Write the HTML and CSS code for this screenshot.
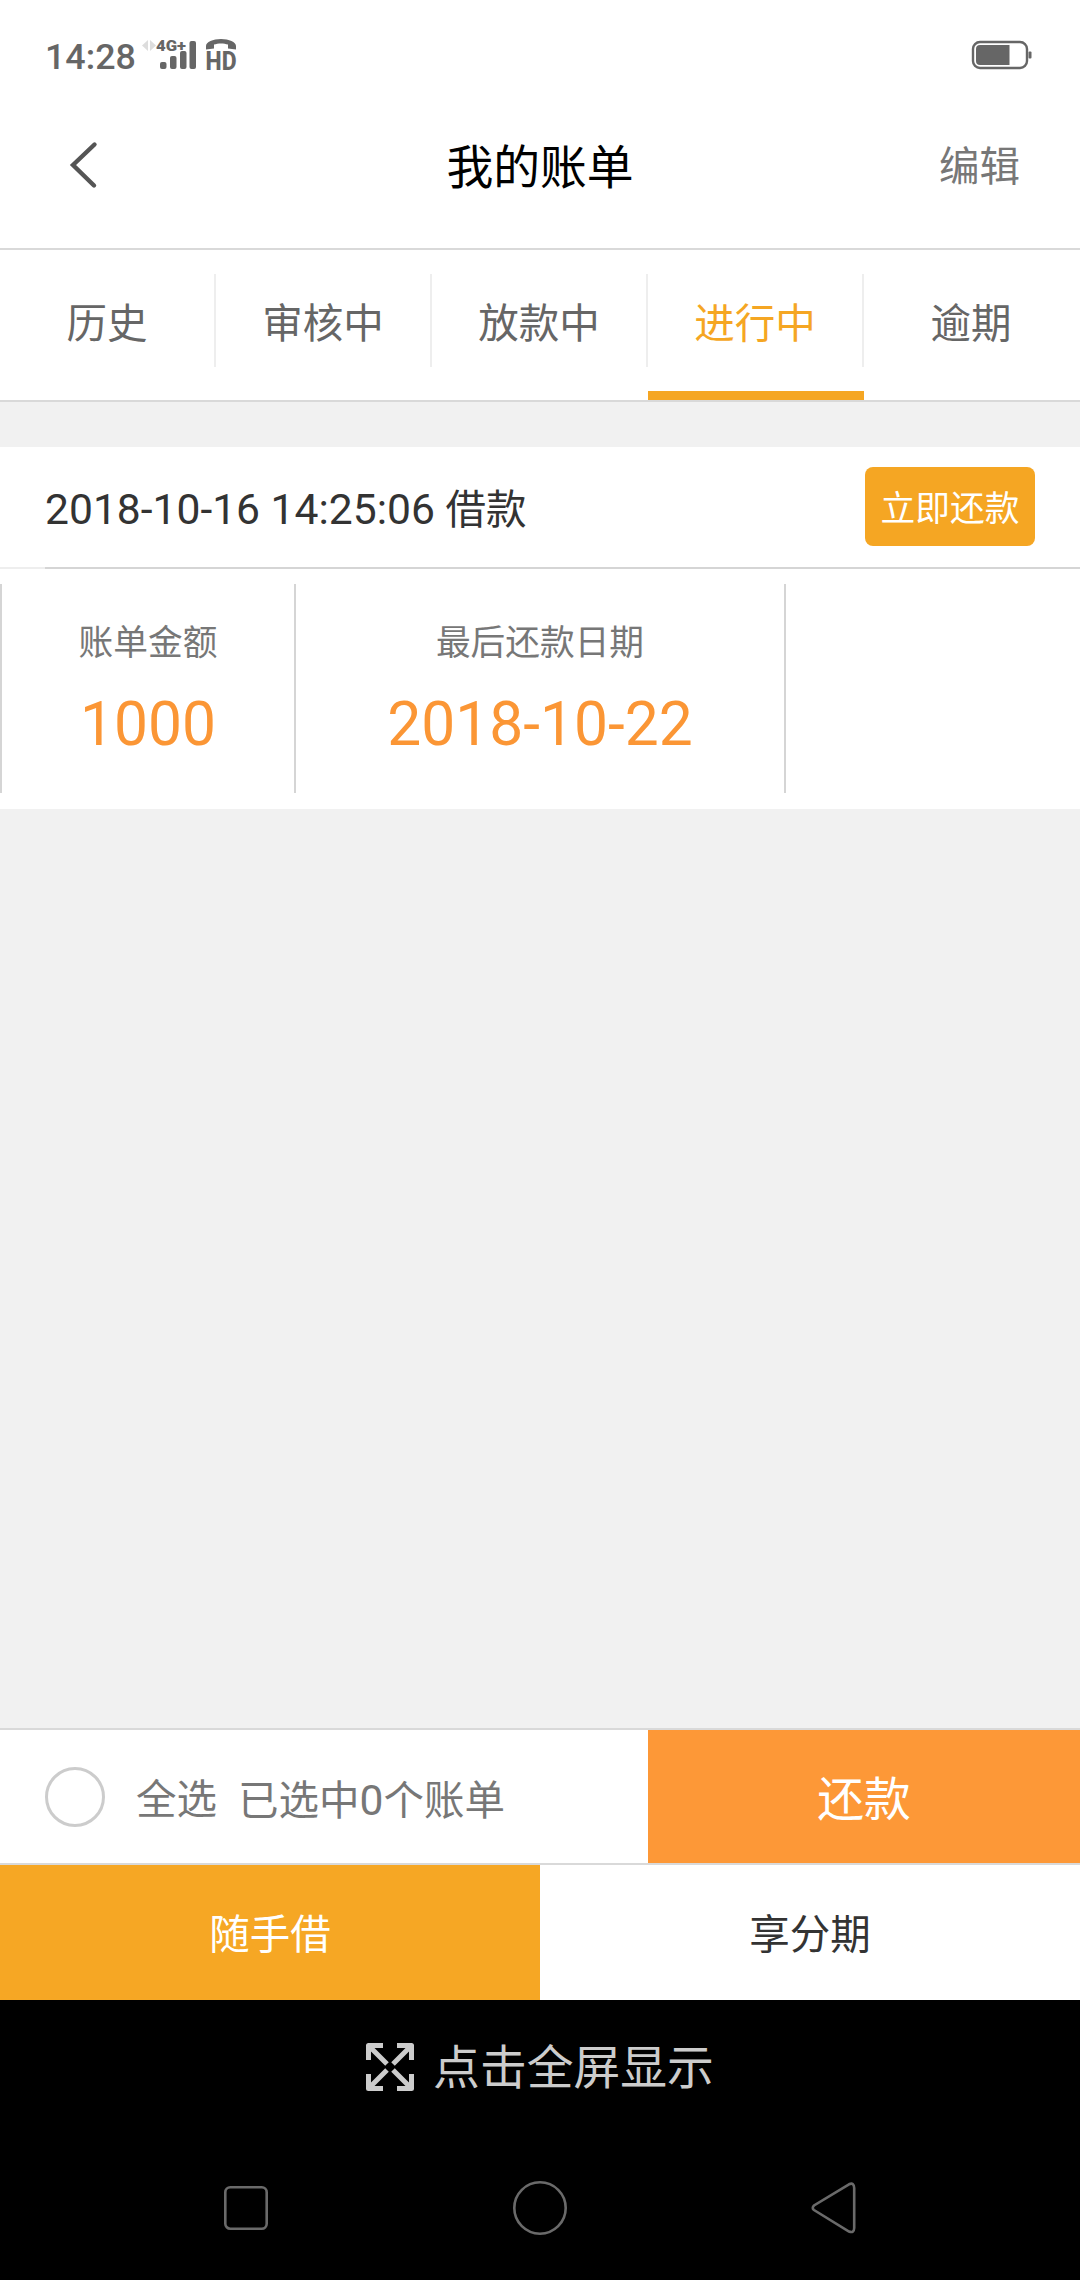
FILE: index.html
```html
<!DOCTYPE html>
<html lang="zh-CN">

<head>
  <meta charset="UTF-8">
  <title>我的账单</title>
  <meta name="viewport" content="width=device-width, initial-scale=1.0">
  <link rel="stylesheet" href="styles.css">
</head>

<body>
<div class="page">
  <div class="status-bar">
    <div class="status-left">
      <span class="time">14:28</span>
      <svg class="signal" width="104" height="40" viewBox="0 0 104 40">
        <path d="M7 4v11L1 9.500zM9 4v11l6-5.500z" fill="#ddd"/>
        <text class="net" x="15" y="14.500" textLength="30" lengthAdjust="spacingAndGlyphs">4G+</text>
        <rect x="19" y="26" width="6.500" height="7" rx="2"/>
        <rect x="29" y="20" width="6.500" height="13" rx="2"/>
        <rect x="39" y="15" width="6.500" height="18" rx="2"/>
        <rect x="48.500" y="5" width="6.500" height="28" rx="2"/>
        <path d="M65 13.500V10c0-4 7-7 15-7s15 3 15 7v3.500l-8-1V8.500c-4-1.500-10-1.500-14 0v4z"/>
        <text class="hd" x="64.500" y="33.500" textLength="31" lengthAdjust="spacingAndGlyphs">HD</text>
      </svg>
    </div>
    <svg width="62" height="30" viewBox="0 0 62 30">
      <rect x="2" y="2" width="54" height="26" rx="7" fill="none" stroke="#666" stroke-width="2.400"/>
      <path d="M9 5h29.500v20H9a4 4 0 0 1-4-4V9a4 4 0 0 1 4-4z" fill="#666"/>
      <rect x="57.500" y="11.500" width="3" height="7" rx="1" fill="#666"/>
    </svg>
  </div>

  <div class="header">
    <svg class="back" width="30" height="48" viewBox="0 0 30 48">
      <path d="M25.500 3.500L4 24l21 20.500" fill="none" stroke="#555" stroke-width="4.400" stroke-linecap="round"/>
    </svg>
    <div class="title">我的账单</div>
    <div class="edit">编辑</div>
  </div>

  <div class="tabs">
    <div class="tab">历史</div>
    <div class="tab">审核中</div>
    <div class="tab">放款中</div>
    <div class="tab active">进行中</div>
    <div class="tab">逾期</div>
  </div>

  <div class="content">
    <div class="card">
      <div class="card-head">
        <div class="card-title"><span class="num">2018-10-16 14:25:06 </span>借款</div>
        <button class="pay-btn">立即还款</button>
      </div>
      <div class="card-line"></div>
      <div class="card-body">
        <div class="cell">
          <div class="label">账单金额</div>
          <div class="value">1000</div>
        </div>
        <div class="cell">
          <div class="label">最后还款日期</div>
          <div class="value">2018-10-22</div>
        </div>
        <div class="cell"></div>
      </div>
    </div>
  </div>

  <div class="select-bar">
    <div class="select-left">
      <span class="circle"></span>
      <span class="all">全选</span>
      <span class="count">已选中<span class="num">0</span>个账单</span>
    </div>
    <div class="repay">还款</div>
  </div>

  <div class="bottom-tabs">
    <div class="bottom-tab on">随手借</div>
    <div class="bottom-tab">享分期</div>
  </div>

  <div class="fullscreen">
    <svg width="48" height="48" viewBox="0 0 48 48">
      <g fill="none" stroke="#ccc" stroke-width="5">
        <path d="M17 2.500H2.500V17M31 2.500h14.500V17M17 45.500H2.500V31M31 45.500h14.500V31" stroke-linejoin="round"/>
        <path d="M3 3l18 18M45 3L27 21M3 45l18-18M45 45L27 27"/>
      </g>
    </svg>
    <span>点击全屏显示</span>
  </div>

  <div class="nav">
    <svg width="46" height="56" viewBox="0 0 46 56">
      <rect x="2.300" y="7.300" width="41.400" height="41.400" rx="5" fill="none" stroke="#6a6a6a" stroke-width="2.600"/>
    </svg>
    <svg width="56" height="56" viewBox="0 0 56 56">
      <circle cx="28" cy="28" r="25.700" fill="none" stroke="#6a6a6a" stroke-width="2.600"/>
    </svg>
    <svg width="46" height="56" viewBox="0 0 46 56">
      <path d="M38 4.300L3 25.500Q0.500 28 3 30L38 51.500Q43 53.500 43.200 48V8Q43 2 38 4.300z" fill="none" stroke="#6a6a6a" stroke-width="2.600"/>
    </svg>
  </div>
</div>
</body>
</html>
```
FILE: styles.css
```css
body {
  margin: 0;
  padding: 0;
  font-family: Roboto, "Noto Sans CJK SC", sans-serif;
  background-color: #f1f1f1;
}

.page {
  width: 1080px;
  height: 2280px;
  display: flex;
  flex-direction: column;
  overflow: hidden;
}

svg {
  display: block;
}

/* status bar */
.status-bar {
  height: 84px;
  padding: 0 47px 0 45px;
  display: flex;
  justify-content: space-between;
  background-color: #fff;
}

.status-bar > svg {
  margin-top: 40px;
}

.status-left {
  display: flex;
}

.time {
  width: 96px;
  margin-top: 38px;
  font-size: 35.800px;
  line-height: 38px;
  font-weight: 500;
  color: #666;
}

.signal {
  margin-top: 36px;
  fill: #666;
}

.net {
  font-size: 15px;
  font-weight: 900;
}

.hd {
  font-size: 26px;
  font-weight: 800;
}

/* header */
.header {
  height: 158px;
  padding: 0 60px 6px;
  display: grid;
  grid-template-columns: 1fr auto 1fr;
  align-items: center;
  background-color: #fff;
  border-bottom: 2px solid #d9d9d9;
}

.back {
  margin: 3px 0 0 9px;
}

.title {
  font-size: 46.800px;
  color: #000;
}

.edit {
  font-size: 40.500px;
  color: #777;
  text-align: right;
}

/* tabs */
.tabs {
  height: 150px;
  display: flex;
  background-color: #fff;
  border-bottom: 2px solid #d9d9d9;
}

.tab {
  flex: 1;
  box-sizing: border-box;
  height: 150px;
  padding-right: 2px;
  line-height: 149px;
  text-align: center;
  font-size: 40.500px;
  color: #666;
  background: linear-gradient(#eee, #eee) right 24px / 2px 93px no-repeat;
}

.tab:last-child {
  background: none;
}

.tab.active {
  color: #f5a623;
  border-bottom: 9px solid #f5a623;
  background-origin: border-box;
}

/* bill card */
.content {
  flex: 1;
  padding-top: 45px;
}

.card {
  background-color: #fff;
}

.card-head {
  height: 118px;
  padding: 0 45px 2px;
  display: flex;
  align-items: center;
  justify-content: space-between;
}

.card-title {
  font-size: 40.500px;
  color: #333;
  white-space: pre;
}

.num {
  font-size: 42.600px;
}

.pay-btn {
  width: 170px;
  height: 79px;
  padding: 0;
  border: none;
  border-radius: 8px;
  background-color: #f5a623;
  color: #fff;
  font-family: inherit;
  font-size: 34.700px;
}

.card-line {
  height: 2px;
  background: linear-gradient(to right, #eee 45px, #d5d5d5 45px);
}

.card-body {
  display: grid;
  grid-template-columns: 294px 490px 1fr;
  padding: 15px 0 16px;
}

.cell {
  height: 209px;
  border-left: 2px solid #d5d5d5;
  text-align: center;
}

.label {
  margin-top: 34px;
  font-size: 34.700px;
  line-height: 50px;
  color: #777;
}

.value {
  margin-top: 22px;
  font-size: 60.500px;
  line-height: 70px;
  color: #fb9635;
}

/* select all + repay */
.select-bar {
  height: 133px;
  display: flex;
  background-color: #fff;
  border-top: 2px solid #d9d9d9;
  border-bottom: 2px solid #d9d9d9;
}

.select-left {
  width: 648px;
  padding-left: 45px;
  box-sizing: border-box;
  display: flex;
  align-items: center;
  font-size: 40.500px;
  line-height: 60px;
  color: #777;
}

.circle {
  width: 54px;
  height: 54px;
  border: 3px solid #ccc;
  border-radius: 50%;
}

.all {
  margin: 7px 21px 0 31px;
}

.count {
  margin-top: 7px;
}

.repay {
  flex: 1;
  line-height: 141px;
  height: 133px;
  text-align: center;
  font-size: 46.800px;
  color: #fff;
  background-color: #fd9837;
}

.bottom-tabs {
  height: 135px;
  display: flex;
}

.bottom-tab {
  flex: 1;
  height: 135px;
  line-height: 141px;
  text-align: center;
  font-size: 40.500px;
  color: #333;
  background-color: #fff;
}

.bottom-tab.on {
  color: #fff;
  background-color: #f6a724;
}

/* system area */
.fullscreen {
  height: 134px;
  display: flex;
  align-items: center;
  justify-content: center;
  gap: 19px;
  font-size: 46.800px;
  color: #ccc;
  background-color: #000;
}

.fullscreen span {
  padding-bottom: 7px;
}

.nav {
  height: 144px;
  padding: 2px 223px 0;
  display: flex;
  align-items: center;
  justify-content: space-between;
  background-color: #000;
}
```
